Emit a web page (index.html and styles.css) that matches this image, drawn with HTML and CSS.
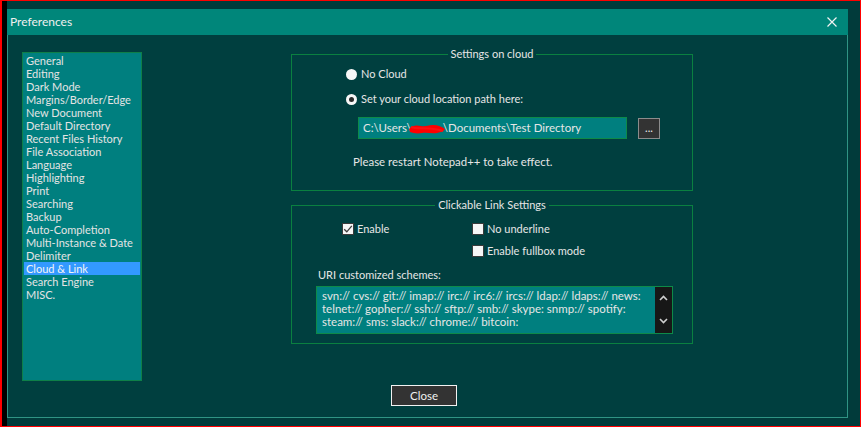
FILE: index.html
```html
<!DOCTYPE html>
<html>
<head>
<meta charset="utf-8">
<link rel="stylesheet" href="styles.css">
</head>
<body>
<div class="screen">
  <div class="frame">
    <div class="dialog">
      <div class="titlebar">
        <span class="title">Preferences</span>
        <svg class="xbtn" width="10" height="10" viewBox="0 0 10 10"><path d="M0.5 0.5 L9.5 9.5 M9.5 0.5 L0.5 9.5" stroke="#f2f2f2" stroke-width="1.2" fill="none"/></svg>
      </div>
      <div class="body">
        <div class="main">
          <ul class="list">
            <li>General</li>
            <li>Editing</li>
            <li>Dark Mode</li>
            <li>Margins/Border/Edge</li>
            <li>New Document</li>
            <li>Default Directory</li>
            <li>Recent Files History</li>
            <li>File Association</li>
            <li>Language</li>
            <li>Highlighting</li>
            <li>Print</li>
            <li>Searching</li>
            <li>Backup</li>
            <li>Auto-Completion</li>
            <li>Multi-Instance &amp; Date</li>
            <li>Delimiter</li>
            <li class="sel">Cloud &amp; Link</li>
            <li>Search Engine</li>
            <li>MISC.</li>
          </ul>
          <div class="pane">
            <div class="group g1">
              <div class="legend">Settings on cloud</div>
              <div class="radio-row r1"><span class="radio"></span>No Cloud</div>
              <div class="radio-row r2"><span class="radio on"></span>Set your cloud location path here:</div>
              <div class="path-row">
                <div class="path">C:\Users\<svg class="scribble" width="38" height="12" viewBox="0 0 38 12"><path d="M1 6 C4 2 9 2 13 3 C17 4 20 2 25 2 C30 2 34 4 37 6 C36 8 33 9 29 10 C24 11 19 9 14 10 C9 11 5 10 2 9 Z" fill="#ff0000"/><path d="M3 4 C10 7 20 3 35 8" stroke="#ff1010" stroke-width="2" fill="none"/></svg>\Documents\Test Directory</div>
                <div class="dots">...</div>
              </div>
              <div class="note">Please restart Notepad++ to take effect.</div>
            </div>
            <div class="group g2">
              <div class="legend">Clickable Link Settings</div>
              <div class="check-row row1">
                <div class="check first"><span class="box"><svg width="10" height="10" viewBox="0 0 10 10"><path d="M1.2 5.2 L3.8 7.8 L8.8 1.8" stroke="#3c3c3c" stroke-width="1.3" fill="none"/></svg></span>Enable</div>
                <div class="check"><span class="box"></span>No underline</div>
              </div>
              <div class="check-row row2">
                <div class="check"><span class="box"></span>Enable fullbox mode</div>
              </div>
              <div class="uri-label">URI customized schemes:</div>
              <div class="uri">
                <div class="uri-text">
                  <div>svn:// cvs:// git:// imap:// irc:// irc6:// ircs:// ldap:// ldaps:// news:</div>
                  <div>telnet:// gopher:// ssh:// sftp:// smb:// skype: snmp:// spotify:</div>
                  <div>steam:// sms: slack:// chrome:// bitcoin:</div>
                </div>
                <div class="sb">
                  <svg width="9" height="6" viewBox="0 0 9 6"><path d="M1 5 L4.5 1.5 L8 5" stroke="#cfcfcf" stroke-width="1.6" fill="none"/></svg>
                  <svg width="9" height="6" viewBox="0 0 9 6"><path d="M1 1 L4.5 4.5 L8 1" stroke="#cfcfcf" stroke-width="1.6" fill="none"/></svg>
                </div>
              </div>
            </div>
          </div>
        </div>
        <div class="footer"><div class="close">Close</div></div>
      </div>
    </div>
  </div>
</div>
</body>
</html>
```
FILE: styles.css
```css
html, body {
  margin: 0;
  padding: 0;
  background: #000;
}
.screen {
  width: 861px;
  height: 427px;
  box-sizing: border-box;
  border-top: 1px solid #ff0000;
  border-right: 1px solid #ff0000;
  border-bottom: 1px solid #ff0000;
  border-left: 2px solid #ff0000;
  background: #013b3b;
  font-family: Lato, "Liberation Sans", sans-serif;
  font-size: 11px;
  color: #e6e6e6;
}
.frame {
  height: 100%;
  box-sizing: border-box;
  border-left: 5px solid #000;
  padding-top: 8px;
}
.dialog {
  width: 841px;
  height: 409px;
  display: flex;
  flex-direction: column;
}
.titlebar {
  height: 26px;
  background: #00867a;
  display: flex;
  align-items: center;
  justify-content: space-between;
  padding: 0 11px 0 3px;
  flex-shrink: 0;
}
.title {
  color: #f0f0f0;
  font-size: 12px;
  line-height: 14px;
}
.xbtn {
  display: block;
}
.body {
  flex: 1;
  background: #003f3f;
  border: 1px solid #2f9484;
  border-top: none;
  display: flex;
  flex-direction: column;
}
.main {
  display: flex;
  align-items: flex-start;
}
.list {
  list-style: none;
  margin: 17px 0 0 14px;
  padding: 1px;
  width: 120px;
  height: 329px;
  box-sizing: border-box;
  background: #007f7f;
  border: 1px solid #0e7f48;
  color: #e4e4e4;
}
.list li {
  height: 13px;
  line-height: 13px;
  padding-left: 2px;
  white-space: nowrap;
}
.list li.sel {
  background: #3399ff;
  color: #f4f4f4;
}
.pane {
  margin-left: 149px;
  margin-top: 19px;
  width: 402px;
}
.group {
  border: 1px solid #0a8040;
  box-sizing: border-box;
}
.g1 {
  height: 137px;
}
.g2 {
  height: 139px;
  margin-top: 14px;
}
.legend {
  margin: -8px auto 0;
  width: fit-content;
  padding: 0 3px;
  background: #003f3f;
  line-height: 14px;
}
.radio-row {
  display: flex;
  align-items: center;
  height: 14px;
  line-height: 14px;
  padding-left: 54px;
}
.r1 {
  margin-top: 6px;
}
.r2 {
  margin-top: 11px;
}
.radio {
  width: 11px;
  height: 11px;
  border-radius: 50%;
  background: #f7f7f7;
  margin-right: 4px;
  box-sizing: border-box;
  display: flex;
  align-items: center;
  justify-content: center;
}
.radio.on::after {
  content: "";
  width: 5px;
  height: 5px;
  border-radius: 50%;
  background: #2a2a2a;
}
.path-row {
  display: flex;
  align-items: flex-start;
  margin-top: 11px;
  padding-left: 66px;
}
.path {
  width: 269px;
  height: 22px;
  box-sizing: border-box;
  background: #007f7f;
  border: 1px solid #0e8a48;
  padding-left: 4px;
  line-height: 20px;
  white-space: nowrap;
  display: flex;
  align-items: center;
  font-size: 11.5px;
}
.scribble {
  margin: 1px -3px 0 -4px;
  flex-shrink: 0;
}
.dots {
  margin-left: 11px;
  margin-top: 1px;
  width: 22px;
  height: 21px;
  box-sizing: border-box;
  background: #333333;
  border: 1px solid #8c8c8c;
  text-align: center;
  line-height: 17px;
  color: #ececec;
}
.note {
  margin-top: 16px;
  padding-left: 61px;
  line-height: 14px;
  font-size: 11.4px;
}
.check-row {
  display: flex;
  height: 14px;
  line-height: 14px;
  padding-left: 50px;
}
.row1 {
  margin-top: 10px;
}
.row2 {
  margin-top: 8px;
  padding-left: 180px;
}
.check {
  display: flex;
  align-items: center;
}
.check.first {
  width: 130px;
}
.box {
  width: 12px;
  height: 12px;
  box-sizing: border-box;
  background: #f6f6f6;
  border: 1px solid #3a3a3a;
  margin-right: 3px;
  display: flex;
  align-items: center;
  justify-content: center;
}
.box svg {
  display: block;
}
.uri-label {
  margin-top: 10px;
  padding-left: 26px;
  line-height: 14px;
}
.uri {
  margin: 4px 0 0 24px;
  width: 357px;
  height: 48px;
  box-sizing: border-box;
  background: #007f7f;
  border: 1px solid #0e8a48;
  display: flex;
}
.uri-text {
  flex: 1;
  padding: 2px 0 0 5px;
  line-height: 13px;
  white-space: nowrap;
  overflow: hidden;
  font-size: 11.5px;
}
.sb {
  width: 17px;
  background: #171717;
  display: flex;
  flex-direction: column;
  align-items: center;
  justify-content: space-between;
  padding: 8px 0 9px;
  box-sizing: border-box;
}
.sb svg {
  display: block;
}
.footer {
  padding-left: 383px;
  margin-top: 4px;
}
.close {
  width: 66px;
  height: 21px;
  box-sizing: border-box;
  background: #333333;
  border: 1px solid #f2f2f2;
  text-align: center;
  line-height: 19px;
  color: #f0f0f0;
  font-size: 11.5px;
}
```
